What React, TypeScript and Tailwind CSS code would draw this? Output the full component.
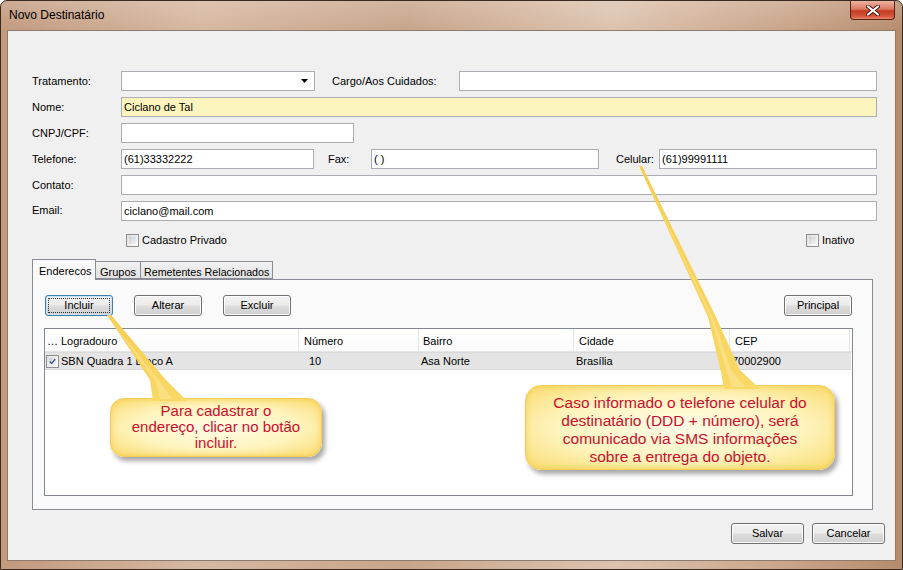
import React from "react";

function Label({ w, children, extra = "" }: { w: string; children: React.ReactNode; extra?: string }) {
  return <div className={`${w} ${extra} shrink-0 whitespace-nowrap`}>{children}</div>;
}

function Field({ w, value = "", yellow = false }: { w: string; value?: string; yellow?: boolean }) {
  return (
    <div
      className={`${w} h-[20px] shrink-0 border border-[#abadb3] ${
        yellow ? "bg-[#fcf4bd]" : "bg-white"
      } flex items-center pl-[2px] whitespace-nowrap`}
    >
      {value}
    </div>
  );
}

function Btn({ label, w = "w-[68px]", focused = false }: { label: string; w?: string; focused?: boolean }) {
  return (
    <div
      className={`relative ${w} h-[21px] shrink-0 rounded-[3px] border ${
        focused
          ? "border-[#3c7fb1] shadow-[inset_0_0_0_1px_#c5e2f7]"
          : "border-[#707070] shadow-[inset_0_0_0_1px_rgba(255,255,255,0.85)]"
      } bg-[linear-gradient(#f2f2f2_0%,#ebebeb_48%,#dddddd_52%,#cfcfcf_100%)] flex items-center justify-center`}
    >
      {focused && <span className="absolute inset-[2px] border border-dotted border-[#333]" />}
      {label}
    </div>
  );
}

function Check({ checked = false }: { checked?: boolean }) {
  return (
    <div className="w-[13px] h-[13px] shrink-0 border border-[#8f8f8f] bg-[linear-gradient(135deg,#dcdcdc,#ffffff)] p-[2px]">
      <div className="w-full h-full bg-[linear-gradient(135deg,#cbcfd5,#f4f4f4)] flex items-center justify-center">
        {checked && (
          <svg width="9" height="9" viewBox="0 0 9 9">
            <path d="M1 4.5 L3.5 7 L8 1.5" fill="none" stroke="#2c4a8c" strokeWidth="1.6" />
          </svg>
        )}
      </div>
    </div>
  );
}

function Row({ children, mt = "mt-[6px]" }: { children: React.ReactNode; mt?: string }) {
  return <div className={`flex items-center h-[20px] ${mt}`}>{children}</div>;
}

export default function App() {
  return (
    <div className="relative w-[903px] h-[570px] overflow-hidden rounded-t-[7px] border border-[#3b2a1f] bg-[linear-gradient(90deg,#c29a7e_0%,#d6b8a1_22%,#c8a58a_45%,#dcc3af_68%,#c9a387_88%,#b68c6e_100%)] font-['Liberation_Sans',Arial,sans-serif] text-[11px] text-black">
      {/* title bar */}
      <div className="flex h-[29px] bg-[linear-gradient(180deg,rgba(255,255,255,0.18),rgba(255,255,255,0))]">
        <span className="pl-[8px] pt-[7px] text-[12px] leading-[15px]">Novo Destinatário</span>
        <div className="ml-auto mr-[7px] w-[45px] h-[19px] rounded-b-[4px] border border-t-0 border-[#5b2216] bg-[linear-gradient(180deg,#eab3a2_0%,#dc7a62_45%,#c43b22_55%,#d6573b_85%,#e88a6c_100%)] flex items-center justify-center">
          <svg width="14" height="11" viewBox="0 0 14 11">
            <path d="M2 1.5 L12 9.5 M12 1.5 L2 9.5" stroke="#4a1a10" strokeWidth="4" strokeLinecap="round" />
            <path d="M2 1.5 L12 9.5 M12 1.5 L2 9.5" stroke="#ffffff" strokeWidth="2.2" strokeLinecap="round" />
          </svg>
        </div>
      </div>

      {/* client area */}
      <div className="mx-[6px] h-[531px] border border-[#8c7a6c] bg-[#f0f0f0] flex flex-col">
        <div className="pl-[24px] pt-[40px]">
          <Row mt="mt-0">
            <Label w="w-[89px]">Tratamento:</Label>
            <div className="w-[194px] h-[20px] border border-[#abadb3] bg-white flex items-center justify-end pr-[6px]">
              <svg width="7" height="4" viewBox="0 0 7 4">
                <path d="M0 0 L7 0 L3.5 4 Z" fill="#000" />
              </svg>
            </div>
            <Label w="w-[127px]" extra="ml-[17px]">Cargo/Aos Cuidados:</Label>
            <Field w="w-[418px]" />
          </Row>
          <Row>
            <Label w="w-[89px]">Nome:</Label>
            <Field w="w-[756px]" value="Ciclano de Tal" yellow />
          </Row>
          <Row>
            <Label w="w-[89px]">CNPJ/CPF:</Label>
            <Field w="w-[233px]" />
          </Row>
          <Row>
            <Label w="w-[89px]">Telefone:</Label>
            <Field w="w-[193px]" value="(61)33332222" />
            <Label w="w-[43px]" extra="ml-[14px]">Fax:</Label>
            <Field w="w-[228px]" value="(  )" />
            <Label w="w-[43px]" extra="ml-[17px]">Celular:</Label>
            <Field w="w-[218px]" value="(61)99991111" />
          </Row>
          <Row>
            <Label w="w-[89px]">Contato:</Label>
            <Field w="w-[756px]" />
          </Row>
          <div className="flex h-[20px] mt-[6px]">
            <Label w="w-[89px]" extra="pt-[1px]">Email:</Label>
            <Field w="w-[756px]" value="ciclano@mail.com" />
          </div>

          <div className="flex items-center h-[13px] mt-[13px] w-[845px]">
            <div className="ml-[94px]">
              <Check />
            </div>
            <span className="ml-[3px]">Cadastro Privado</span>
            <div className="ml-auto w-[71px] flex items-center">
              <Check />
              <span className="ml-[3px]">Inativo</span>
            </div>
          </div>

          {/* tabs */}
          <div className="flex items-end h-[20px] mt-[12px]">
            <div className="relative z-10 w-[64px] h-[21px] -mb-[1px] border border-b-0 border-[#898c95] bg-[#fafafa] pl-[6px] pt-[3px] whitespace-nowrap">
              Enderecos
            </div>
            <div className="w-[45px] h-[18px] border border-l-0 border-[#898c95] bg-[linear-gradient(#f2f2f2,#e1e1e1)] pl-[4px] pt-[2px] whitespace-nowrap">
              Grupos
            </div>
            <div className="w-[132px] h-[18px] border border-l-0 border-[#898c95] bg-[linear-gradient(#f2f2f2,#e1e1e1)] pl-[3px] pt-[2px] whitespace-nowrap overflow-hidden text-[10.7px]">
              Remetentes Relacionados
            </div>
          </div>
          <div className="w-[841px] h-[231px] border border-[#898c95] bg-[#fafafa] pl-[11px] pr-[20px] pt-[15px]">
            <div className="flex pl-[1px]">
              <Btn label="Incluir" focused />
              <div className="ml-[21px]">
                <Btn label="Alterar" />
              </div>
              <div className="ml-[21px]">
                <Btn label="Excluir" />
              </div>
              <div className="ml-auto">
                <Btn label="Principal" />
              </div>
            </div>

            {/* list */}
            <div className="mt-[12px] w-[809px] h-[168px] border border-[#828790] bg-white">
              <div className="flex h-[23px] border-b border-[#e5e5e5] bg-[linear-gradient(#ffffff,#fbfbfb)]">
                <div className="w-[14px] pl-[2px] pt-[3px] flex items-center">…</div>
                <div className="w-[240px] border-r border-[#e3e4e6] pl-[2px] pt-[3px] flex items-center">Logradouro</div>
                <div className="w-[120px] border-r border-[#e3e4e6] pl-[5px] pt-[3px] flex items-center">Número</div>
                <div className="w-[155px] border-r border-[#e3e4e6] pl-[4px] pt-[3px] flex items-center">Bairro</div>
                <div className="w-[156px] border-r border-[#e3e4e6] pl-[5px] pt-[3px] flex items-center">Cidade</div>
                <div className="w-[120px] border-r border-[#e3e4e6] pl-[5px] pt-[3px] flex items-center">CEP</div>
              </div>
              <div className="flex items-center h-[18px] w-[806px] bg-[#e4e4e4] border-y border-[#dadada]">
                <div className="w-[14px] pl-[1px]">
                  <Check checked />
                </div>
                <div className="w-[240px] pl-[2px] whitespace-nowrap">SBN Quadra 1 Bloco A</div>
                <div className="w-[120px] pl-[10px]">10</div>
                <div className="w-[155px] pl-[2px]">Asa Norte</div>
                <div className="w-[156px] pl-[2px]">Brasília</div>
                <div className="w-[120px] pl-[2px]">70002900</div>
              </div>
            </div>
          </div>
        </div>

        <div className="flex justify-end gap-[8px] pr-[10px] mt-[13px]">
          <Btn label="Salvar" w="w-[73px]" />
          <Btn label="Cancelar" w="w-[73px]" />
        </div>
      </div>

      {/* callouts over the form */}
      <div className="absolute left-[-1px] top-[-1px] w-[903px] h-[570px] pointer-events-none">
        <div className="absolute left-[110px] top-[398px] w-[212px] h-[59px] rounded-[14px] border border-[#f3cc55] bg-[radial-gradient(ellipse_at_center,#fffce6_0%,#fef4bf_55%,#f9db6e_100%)] shadow-[inset_0_0_6px_#f5cf4e,3px_4px_5px_rgba(0,0,0,0.35)] flex items-center justify-center pb-[2px] text-center font-['Liberation_Sans',Arial,sans-serif] text-[15px] leading-[16px] text-[#c8102e]">
          Para cadastrar o<br />
          endereço, clicar no botão<br />
          incluir.
        </div>
        <div className="absolute left-[525px] top-[385px] w-[310px] h-[85px] rounded-[16px] border border-[#f3cc55] bg-[radial-gradient(ellipse_at_center,#fffce6_0%,#fef4bf_55%,#f9db6e_100%)] shadow-[inset_0_0_6px_#f5cf4e,3px_4px_5px_rgba(0,0,0,0.35)] flex items-center justify-center pt-[4px] text-center font-['Liberation_Sans',Arial,sans-serif] text-[15.5px] leading-[18px] text-[#c8102e]">
          Caso informado o telefone celular do<br />
          destinatário (DDD + número), será<br />
          comunicado via SMS informações<br />
          sobre a entrega do objeto.
        </div>
        <svg className="absolute left-0 top-0" width="903" height="570" viewBox="0 0 903 570">
          <defs>
            <linearGradient id="pt" x1="0" y1="0" x2="0" y2="1">
              <stop offset="0" stopColor="#f6cd52" />
              <stop offset="1" stopColor="#f9d865" />
            </linearGradient>
          </defs>
          <path d="M107 315 L150 380 L153 401 L187 401 L166 380 L111 315 Z" fill="url(#pt)" />
          <path d="M109 318 L156 382 L160 399 L172 399 L160 382 Z" fill="#fbe48e" opacity="0.7" />
          <path d="M639 166 L708 317 L721 372 L724 389 L760 389 L740 370 L716 317 L642 166 Z" fill="url(#pt)" />
          <path d="M641 170 L711 318 L727 372 L732 387 L745 387 L731 370 L713 318 Z" fill="#fbe48e" opacity="0.7" />
        </svg>
      </div>
    </div>
  );
}
